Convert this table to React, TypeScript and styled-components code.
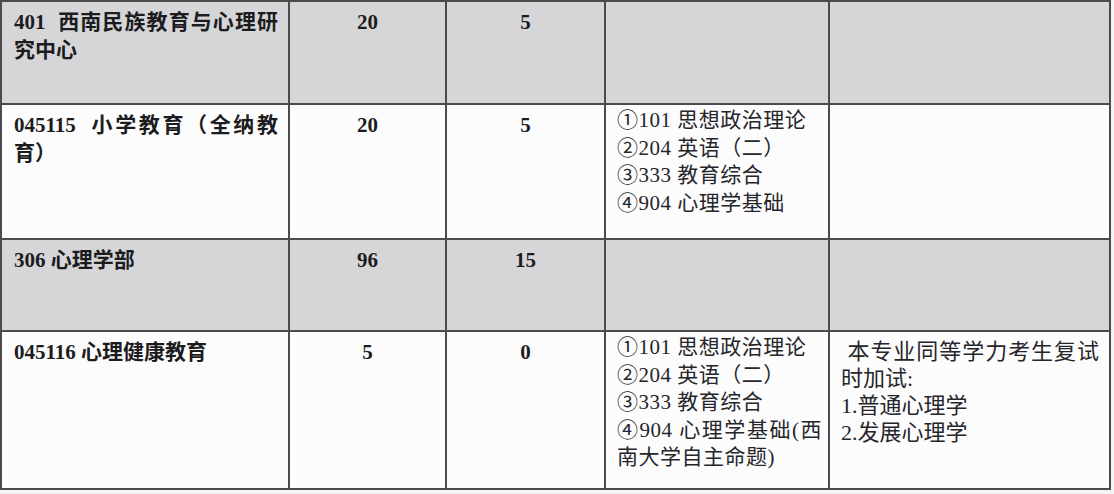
import React from 'react';
import styled, { createGlobalStyle } from 'styled-components';

const GlobalStyle = createGlobalStyle`
  html, body {
    margin: 0;
    padding: 0;
    background: #f4f4f5;
  }
`;

const Sheet = styled.div`
  display: grid;
  grid-template-columns: 286px 155px 157px 222px 279px;
  grid-template-rows: 101px 133px 90px 156px;
  gap: 2px;
  padding: 2px;
  width: max-content;
  background: #4b4b4d;
`;

const Cell = styled.div<{ $shade: boolean }>`
  background: ${(p) => (p.$shade ? '#d6d6d8' : '#fcfcfd')};
  color: #1c1c1e;
  box-sizing: border-box;
  overflow: hidden;
`;

const NameCell = styled(Cell)`
  padding: 6px 10px 0 12px;
  font-family: 'Liberation Serif', 'Noto Sans CJK SC', serif;
  font-weight: 700;
  font-size: 21px;
  line-height: 28px;
  text-align: justify;
  white-space: pre-wrap;
`;

const NumCell = styled(Cell)`
  padding-top: 6px;
  font-family: 'Liberation Serif', serif;
  font-weight: 700;
  font-size: 21px;
  line-height: 28px;
  text-align: center;
`;

const SubjectCell = styled(Cell)`
  padding: 2px 6px 0 11px;
  font-family: 'Liberation Serif', 'Noto Sans CJK SC', serif;
  font-size: 21px;
  line-height: 27.5px;
  letter-spacing: 0.5px;
  text-align: justify;
  color: #26262a;
`;

const NoteCell = styled(Cell)`
  padding: 6px 10px 0 11px;
  font-family: 'Liberation Serif', 'Noto Sans CJK SC', serif;
  font-size: 22px;
  line-height: 27px;
  text-align: justify;
  color: #26262a;
`;

const Line = styled.div`
  display: block;
`;

const subjects = ['①101 思想政治理论', '②204 英语（二）', '③333 教育综合'];

const rows = [
  {
    shade: true,
    name: '401  西南民族教育与心理研究中心',
    plan: '20',
    extra: '5',
    subjects: null as string[] | null,
    note: null as string[] | null,
  },
  {
    shade: false,
    name: '045115  小学教育（全纳教育）',
    plan: '20',
    extra: '5',
    subjects: [...subjects, '④904 心理学基础'],
    note: null,
  },
  {
    shade: true,
    name: '306 心理学部',
    plan: '96',
    extra: '15',
    subjects: null,
    note: null,
  },
  {
    shade: false,
    name: '045116 心理健康教育',
    plan: '5',
    extra: '0',
    subjects: [...subjects, '④904 心理学基础(西南大学自主命题)'],
    note: ['\u00a0本专业同等学力考生复试时加试:', '1.普通心理学', '2.发展心理学'],
  },
];

const App = () => {
  return (
    <>
      <GlobalStyle />
      <Sheet>
        {rows.map((row) => (
          <React.Fragment key={row.name}>
            <NameCell $shade={row.shade}>{row.name}</NameCell>
            <NumCell $shade={row.shade}>{row.plan}</NumCell>
            <NumCell $shade={row.shade}>{row.extra}</NumCell>
            <SubjectCell $shade={row.shade}>
              {row.subjects && row.subjects.map((s) => <Line key={s}>{s}</Line>)}
            </SubjectCell>
            <NoteCell $shade={row.shade}>
              {row.note && row.note.map((n) => <Line key={n}>{n}</Line>)}
            </NoteCell>
          </React.Fragment>
        ))}
      </Sheet>
    </>
  );
};

export default App;
